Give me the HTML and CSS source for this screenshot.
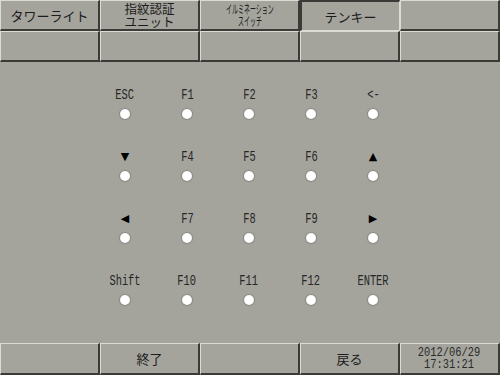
FILE: index.html
```html
<!DOCTYPE html>
<html lang="ja">
<head>
<meta charset="utf-8">
<link rel="stylesheet" href="styles.css">
</head>
<body>
<div class="screen">
  <div class="tabs">
    <div class="btn"><span class="jp">タワーライト</span></div>
    <div class="btn"><span class="jp two"><span class="ln">指紋認証</span><span class="ln">ユニット</span></span></div>
    <div class="btn"><span class="jp narrow"><span class="ln">イルミネーション</span><span class="ln">スイッチ</span></span></div>
    <div class="btn pressed"><span class="jp">テンキー</span></div>
    <div class="btn"></div>
    <div class="btn"></div>
    <div class="btn"></div>
    <div class="btn"></div>
    <div class="btn"></div>
    <div class="btn"></div>
  </div>
  <div class="keypad">
    <div class="key"><span class="lbl">ESC</span><span class="led"></span></div>
    <div class="key"><span class="lbl">F1</span><span class="led"></span></div>
    <div class="key"><span class="lbl">F2</span><span class="led"></span></div>
    <div class="key"><span class="lbl">F3</span><span class="led"></span></div>
    <div class="key"><span class="lbl">&lt;-</span><span class="led"></span></div>
    <div class="key"><span class="lbl sym">▼</span><span class="led"></span></div>
    <div class="key"><span class="lbl">F4</span><span class="led"></span></div>
    <div class="key"><span class="lbl">F5</span><span class="led"></span></div>
    <div class="key"><span class="lbl">F6</span><span class="led"></span></div>
    <div class="key"><span class="lbl sym">▲</span><span class="led"></span></div>
    <div class="key"><span class="lbl sym">◀</span><span class="led"></span></div>
    <div class="key"><span class="lbl">F7</span><span class="led"></span></div>
    <div class="key"><span class="lbl">F8</span><span class="led"></span></div>
    <div class="key"><span class="lbl">F9</span><span class="led"></span></div>
    <div class="key"><span class="lbl sym">▶</span><span class="led"></span></div>
    <div class="key"><span class="lbl">Shift</span><span class="led"></span></div>
    <div class="key"><span class="lbl">F10</span><span class="led"></span></div>
    <div class="key"><span class="lbl">F11</span><span class="led"></span></div>
    <div class="key"><span class="lbl">F12</span><span class="led"></span></div>
    <div class="key"><span class="lbl">ENTER</span><span class="led"></span></div>
  </div>
  <div class="footer">
    <div class="btn"></div>
    <div class="btn"><span class="jp">終了</span></div>
    <div class="btn"></div>
    <div class="btn"><span class="jp">戻る</span></div>
    <div class="btn"><span class="date"><span class="ln">2012/06/29</span><span class="ln">17:31:21</span></span></div>
  </div>
</div>
</body>
</html>
```

FILE: styles.css
```css
html, body {
  margin: 0;
  padding: 0;
  background: #a4a49c;
}
.screen {
  width: 500px;
  height: 375px;
  display: flex;
  flex-direction: column;
  background: #a4a49c;
  color: #1c1c1c;
  overflow: hidden;
}
.tabs {
  display: grid;
  grid-template-columns: repeat(5, 100px);
  grid-template-rows: 31px 31px;
}
.btn {
  box-sizing: border-box;
  display: flex;
  align-items: center;
  justify-content: center;
  background: #a4a49c;
  border-top: 1px solid #dcdcd4;
  border-left: 1px solid #dcdcd4;
  border-right: 2px solid #3a3a36;
  border-bottom: 2px solid #3a3a36;
}
.btn.pressed {
  border-top: 2px solid #3a3a36;
  border-left: 2px solid #3a3a36;
  border-right: 1px solid #dcdcd4;
  border-bottom: 1px solid #dcdcd4;
}
.jp {
  font-family: "Noto Sans CJK JP", sans-serif;
  font-size: 13px;
  line-height: 15px;
  text-align: center;
}
.ln {
  display: block;
}
.jp.two {
  display: flex;
  flex-direction: column;
  font-size: 12.5px;
  line-height: 13px;
}
.jp.narrow {
  display: flex;
  flex-direction: column;
  align-items: center;
  font-size: 12px;
  line-height: 12px;
  transform: scaleX(0.5);
  white-space: nowrap;
}
.keypad {
  margin: 26px 0 0 94px;
  display: grid;
  grid-template-columns: repeat(5, 62px);
  grid-auto-rows: 31px;
  row-gap: 31px;
}
.key {
  display: flex;
  flex-direction: column;
  align-items: center;
  gap: 7px;
}
.lbl {
  font-family: "Liberation Mono", monospace;
  font-size: 14px;
  line-height: 14px;
  height: 14px;
  transform: scaleX(0.74);
  white-space: nowrap;
  color: #262626;
}
.lbl.sym {
  font-family: "DejaVu Sans", sans-serif;
  font-size: 11px;
  transform: none;
  color: #000;
}
.led {
  width: 10px;
  height: 10px;
  border-radius: 50%;
  background: radial-gradient(circle at 50% 50%, #ffffff 0, #ffffff 55%, #e6e6e2 80%, #c4c4be 100%);
  box-shadow: 0 0 1px 1px #8a8a84;
}
.footer {
  margin-top: auto;
  display: grid;
  grid-template-columns: repeat(5, 100px);
  height: 32px;
}
.date {
  display: flex;
  flex-direction: column;
  align-items: center;
  font-family: "Liberation Mono", monospace;
  font-size: 13px;
  line-height: 12px;
  transform: scaleX(0.8);
  color: #2a2a2a;
}
```
